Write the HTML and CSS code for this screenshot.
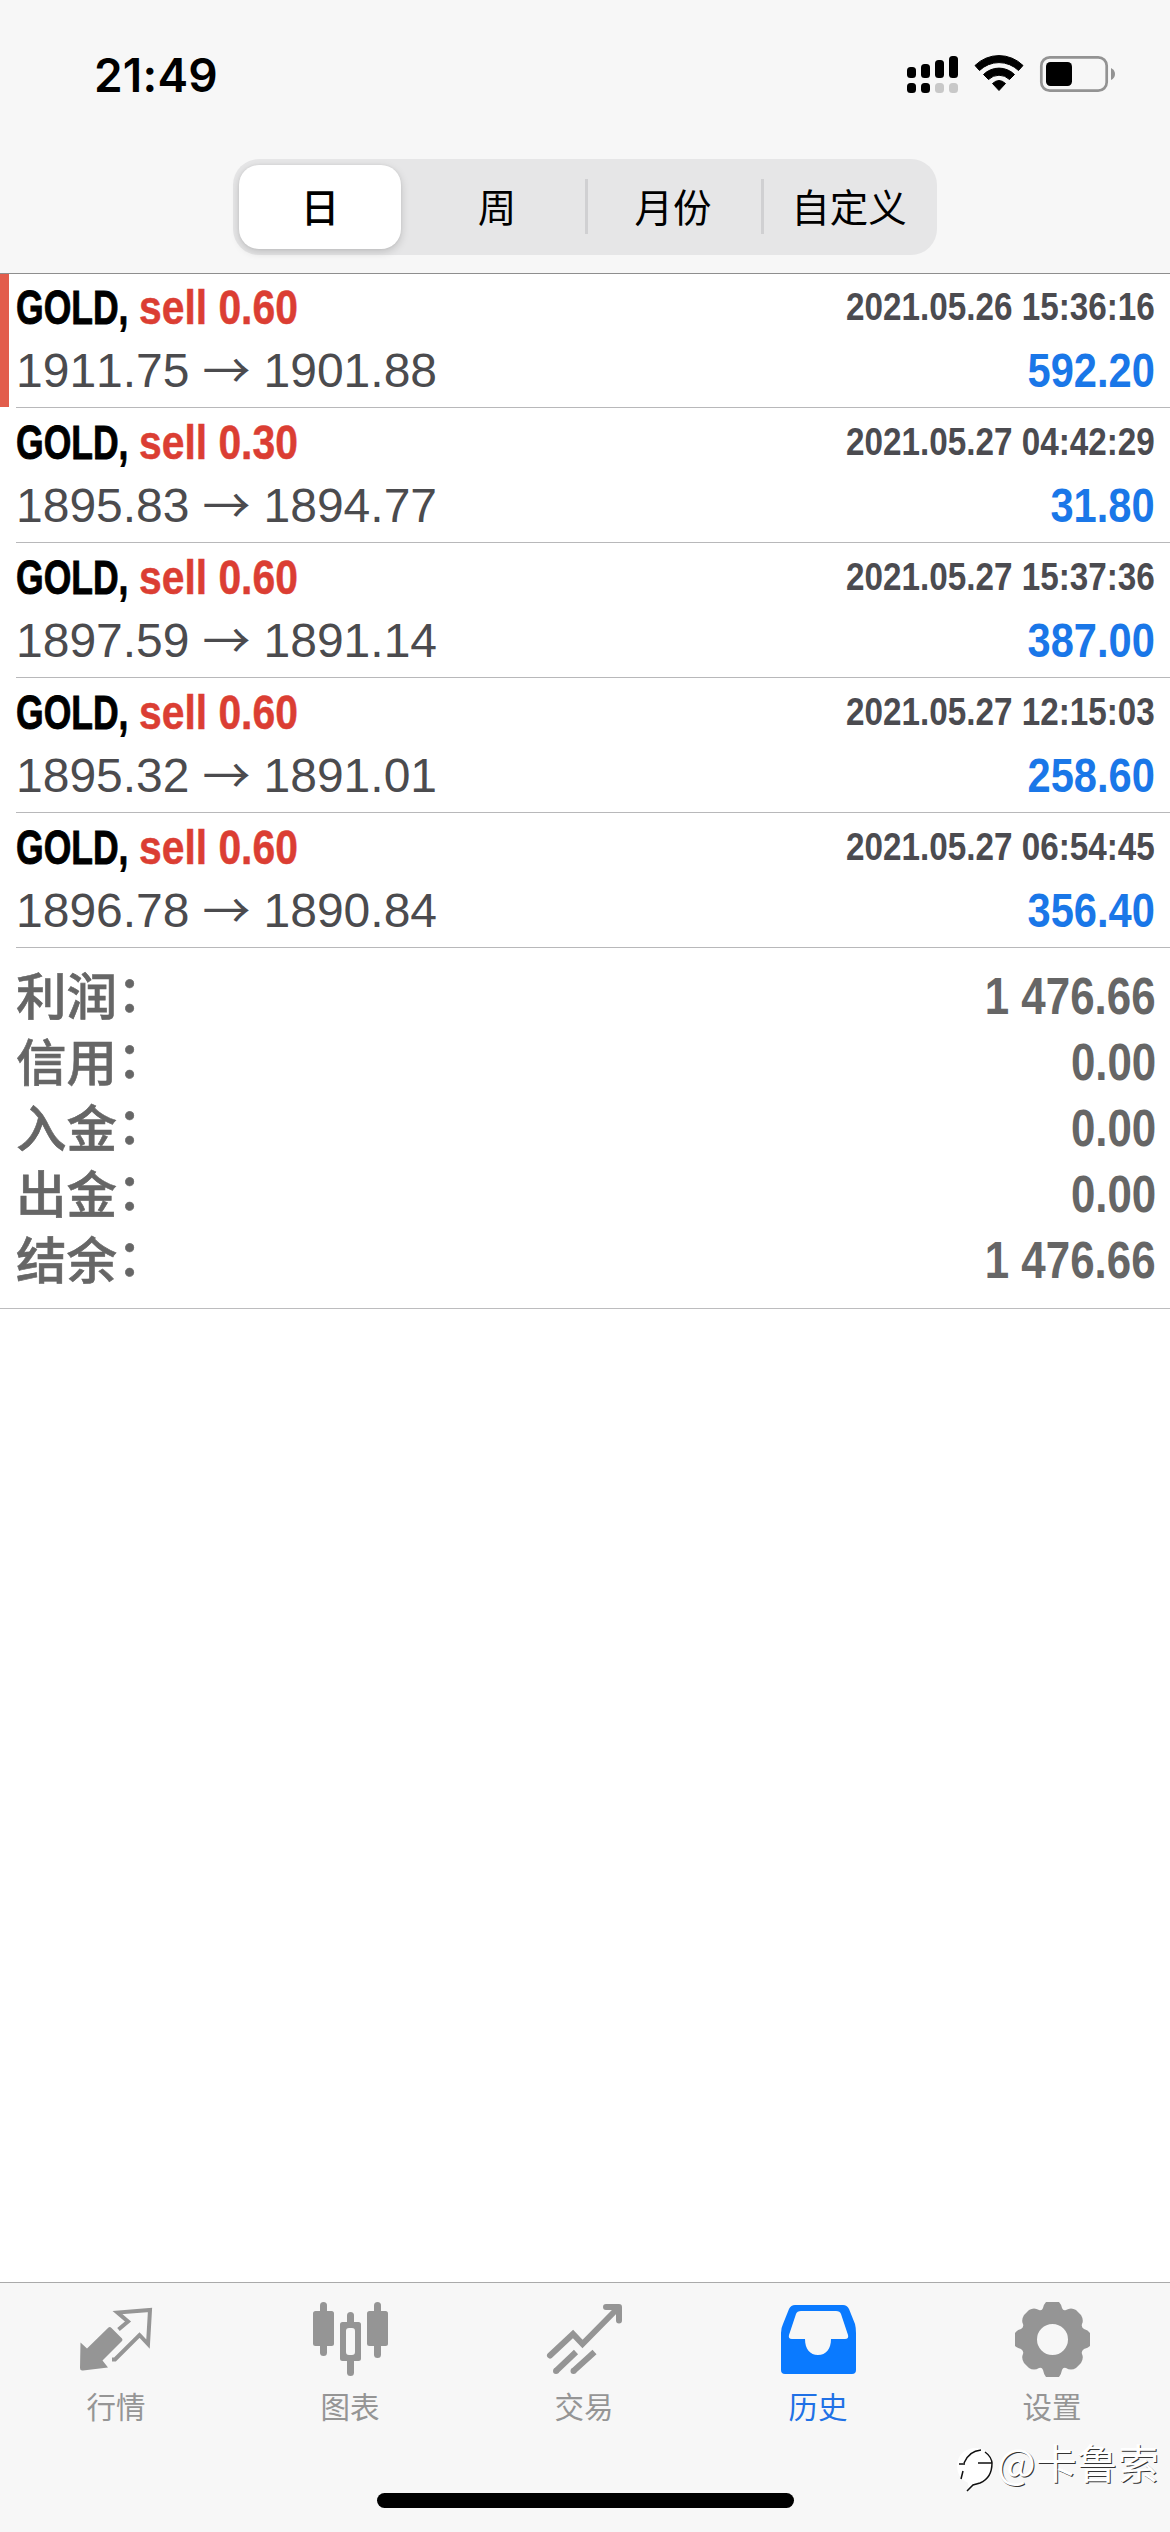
FILE: index.html
```html
<!DOCTYPE html>
<html lang="zh-CN">
<head>
<meta charset="utf-8">
<title>历史</title>
<link rel="stylesheet" href="styles.css">
</head>
<body>
<div class="app">
  <header class="header">
    <div class="status">
      <span class="time">21:49</span>
      <svg class="status-icons" width="212" height="40" viewBox="0 0 212 40">
        <g>
          <rect x="1" y="13" width="9" height="11" rx="3.5"/><rect x="15" y="10" width="9" height="14" rx="3.5"/>
          <rect x="29" y="6" width="9" height="18" rx="3.5"/><rect x="43" y="2" width="9" height="22" rx="3.5"/>
          <rect x="1" y="29" width="9" height="10" rx="3.5"/><rect x="15" y="29" width="9" height="10" rx="3.5"/>
          <rect x="29" y="29" width="9" height="10" rx="3.5" fill="#c8c8c8"/><rect x="43" y="29" width="9" height="10" rx="3.5" fill="#c8c8c8"/>
        </g>
        <path d="M69 11.5A34 34 0 0 1 117 11.5L112.5 16.5A28 28 0 0 0 73.500 16.500Z" stroke="#000" stroke-width="1" stroke-linejoin="round"/>
        <path d="M77.500 20.500A22 22 0 0 1 108.500 20.500L103.500 25.500A15 15 0 0 0 82.500 25.500Z" stroke="#000" stroke-width="1" stroke-linejoin="round"/>
        <path d="M86.500 29.500Q93 23.500 99.500 29.500L93 36.500Z" stroke="#000" stroke-width="1" stroke-linejoin="round"/>
        <rect x="135.300" y="3.300" width="65.400" height="33.400" rx="8.500" fill="none" stroke="#939393" stroke-width="2.700"/>
        <rect x="140" y="8" width="26" height="24" rx="4.500"/>
        <path d="M205 14Q209 16 209 20T205 26Z" fill="#939393"/>
      </svg>
    </div>
    <nav class="segments">
      <span class="segment selected">日</span>
      <span class="segment">周</span>
      <span class="segment divided">月份</span>
      <span class="segment divided">自定义</span>
    </nav>
  </header>

  <main class="history">
    <section class="deal marked"><div class="deal-body">
      <div class="line"><span class="symbol">GOLD,</span><span class="side">sell 0.60</span><span class="date">2021.05.26 15:36:16</span></div>
      <div class="line prices"><span>1911.75</span><span class="arrow">→</span><span>1901.88</span><span class="profit">592.20</span></div>
    </div></section>
    <section class="deal"><div class="deal-body">
      <div class="line"><span class="symbol">GOLD,</span><span class="side">sell 0.30</span><span class="date">2021.05.27 04:42:29</span></div>
      <div class="line prices"><span>1895.83</span><span class="arrow">→</span><span>1894.77</span><span class="profit">31.80</span></div>
    </div></section>
    <section class="deal"><div class="deal-body">
      <div class="line"><span class="symbol">GOLD,</span><span class="side">sell 0.60</span><span class="date">2021.05.27 15:37:36</span></div>
      <div class="line prices"><span>1897.59</span><span class="arrow">→</span><span>1891.14</span><span class="profit">387.00</span></div>
    </div></section>
    <section class="deal"><div class="deal-body">
      <div class="line"><span class="symbol">GOLD,</span><span class="side">sell 0.60</span><span class="date">2021.05.27 12:15:03</span></div>
      <div class="line prices"><span>1895.32</span><span class="arrow">→</span><span>1891.01</span><span class="profit">258.60</span></div>
    </div></section>
    <section class="deal"><div class="deal-body">
      <div class="line"><span class="symbol">GOLD,</span><span class="side">sell 0.60</span><span class="date">2021.05.27 06:54:45</span></div>
      <div class="line prices"><span>1896.78</span><span class="arrow">→</span><span>1890.84</span><span class="profit">356.40</span></div>
    </div></section>

    <section class="summary">
      <div class="total"><span class="label">利润<span class="colon">：</span></span><span class="amount">1 476.66</span></div>
      <div class="total"><span class="label">信用<span class="colon">：</span></span><span class="amount">0.00</span></div>
      <div class="total"><span class="label">入金<span class="colon">：</span></span><span class="amount">0.00</span></div>
      <div class="total"><span class="label">出金<span class="colon">：</span></span><span class="amount">0.00</span></div>
      <div class="total"><span class="label">结余<span class="colon">：</span></span><span class="amount">1 476.66</span></div>
    </section>
  </main>

  <footer class="footer">
    <nav class="tabs">
      <div class="tab">
        <svg width="80" height="80" viewBox="0 0 80 80">
          <path d="M4.500 51.500L11 57.500 32.500 36.500Q34 35.500 35.500 37L46 47.500Q47 49 46 50L26.500 69.500 32 76.500 7 79.500Q4 80 4 77Z"/>
          <path d="M42.500 38.500L52 30.500 41.500 21.500 74 19 72 53 63.500 44 39 68.500H36" fill="none" stroke="#959595" stroke-width="4"/>
        </svg>
        <span>行情</span>
      </div>
      <div class="tab">
        <svg width="80" height="80" viewBox="0 0 80 80">
          <g><rect x="3" y="20" width="21" height="35" rx="2.500"/><rect x="10" y="11" width="7" height="54" rx="3.500"/>
          <rect x="57" y="20" width="21" height="35" rx="2.500"/><rect x="64" y="11" width="7" height="56" rx="3.500"/>
          <rect x="37" y="21" width="7" height="14" rx="3.500"/><rect x="37" y="66" width="7" height="19" rx="3.500"/>
          <path fill-rule="evenodd" d="M32.500 31H48.500Q51 31 51 33.500V67.500Q51 70 48.500 70H32.500Q30 70 30 67.500V33.500Q30 31 32.500 31ZM39 37Q36 37 36 40V61Q36 64 39 64H42Q45 64 45 61V40Q45 37 42 37Z"/></g>
        </svg>
        <span>图表</span>
      </div>
      <div class="tab">
        <svg width="80" height="80" viewBox="0 0 80 80">
          <g fill="none" stroke="#959595" stroke-width="6" stroke-linecap="round"><path d="M6 64.500L29 43 38.500 53 72 19"/><path d="M62 16H75V29.500" stroke-linejoin="round"/></g>
          <g fill="none" stroke="#959595" stroke-width="6"><path d="M12 80L32 61M29.500 80L50.500 61"/><path d="M12 80h.01M29.500 80h.01" stroke-linecap="round"/></g>
        </svg>
        <span>交易</span>
      </div>
      <div class="tab active">
        <svg width="80" height="80" viewBox="0 0 80 80">
          <path fill-rule="evenodd" d="M17 14H65Q69 14 71 18L77 33Q78 37 78 42V79Q78 83 74 83H7Q3 83 3 79V42Q3 37 5 33L11 18Q13 14 17 14ZM23 20Q19 20 18 23L11 44Q10 48 14 48H27C27 58 32 64 40 64C48 64 53 58 53 48H67Q71 48 70 44L63 23Q62 20 58 20Z"/>
        </svg>
        <span>历史</span>
      </div>
      <div class="tab">
        <svg width="80" height="80" viewBox="0 0 80 80">
          <path fill-rule="evenodd" d="M34 11H47Q49 13 50 17Q51 20 54 19Q59 16 64 19L69 24Q72 29 70 33Q69 36 72 38Q76 39 78 42V55Q76 57 72 58Q69 60 70 63Q72 67 69 72L64 77Q59 80 54 77Q51 76 50 79Q49 84 47 86H34Q32 84 31 79Q30 76 27 77Q22 80 17 77L12 72Q9 67 11 63Q12 60 9 58Q5 57 3 55V42Q5 39 9 38Q12 36 11 33Q9 29 12 24L17 19Q22 16 27 19Q30 20 31 17Q32 13 34 11ZM40.500 33A15.500 15.500 0 1 0 40.500 64A15.500 15.500 0 1 0 40.500 33Z"/>
        </svg>
        <span>设置</span>
      </div>
    </nav>
    <div class="home-bar"></div>
  </footer>

  <div class="watermark">
    <svg width="41" height="48" viewBox="0 0 41 48">
      <path d="M18 1Q36 1 37 18Q37 34 22 37L13 43 12 36Q1 31 1 19Q2 3 18 1Z" fill="#fff"/>
      <path d="M8 16Q13 4 25 3M3 17H9M7 24L5 32M22 16H36Q36 31 24 36L17 38 11 44M29 5Q36 10 36 17" fill="none" stroke="#111" stroke-width="1.500"/>
    </svg>
    <span>@卡鲁索</span>
  </div>
</div>
</body>
</html>
```
FILE: styles.css
```css
* { box-sizing: border-box; }
body { margin: 0; background: #fff; }
svg { display: block; overflow: visible; }

.app {
  position: relative;
  display: flex;
  flex-direction: column;
  width: 1170px;
  height: 2532px;
  overflow: hidden;
  font-family: "Liberation Sans", "Noto Sans CJK SC", sans-serif;
  font-kerning: none;
}

.header {
  position: relative;
  z-index: 1;
  height: 273px;
  background: #f7f7f7;
  box-shadow: 0 1px 0 #8e8e8e;
}
.status {
  display: flex;
  justify-content: space-between;
  height: 159px;
  padding: 54px 52px 0 94px;
}
.time {
  font: 600 46px/42px Inter, sans-serif;
  letter-spacing: 0.2px;
}
.segments {
  display: flex;
  width: 704px;
  height: 96px;
  margin-left: 233px;
  padding: 6px 0 6px 6px;
  border-radius: 26px;
  background: #e6e6e7;
  font: 38.500px/80px "Noto Sans CJK SC", sans-serif;
}
.segment {
  flex: 1;
  text-align: center;
}
.segment.selected {
  flex: none;
  width: 162px;
  margin-right: 8px;
  border-radius: 20px;
  background: #fff;
  box-shadow: 0 3px 9px rgba(0, 0, 0, .17), 0 0 3px rgba(0, 0, 0, .06);
  font-weight: 500;
}
.divided {
  background: linear-gradient(#d0d0d2, #d0d0d2) 0 14px / 3px 55px no-repeat;
}

.history { flex: 1; }
.deal {
  height: 135px;
  padding-left: 16px;
}
.deal.marked { background: linear-gradient(#e25d4c, #e25d4c) 0 0 / 9px 134px no-repeat; }
.deal-body {
  height: 135px;
  padding: 4px 15px 0 0;
  border-bottom: 1px solid #b8b8ba;
}
.line {
  display: flex;
  height: 63px;
  line-height: 60px;
  font-size: 49px;
  font-weight: 700;
  white-space: nowrap;
}
.symbol {
  width: 123px;
  transform: scaleX(.725);
  transform-origin: left;
  -webkit-text-stroke: .9px;
}
.side {
  color: #db3e33;
  transform: scaleX(.833);
  transform-origin: left;
  -webkit-text-stroke: .5px;
}
.date {
  margin-left: auto;
  color: #4b4b50;
  font-size: 39.500px;
  line-height: 58px;
  transform: scaleX(.842);
  transform-origin: right;
}
.prices {
  color: #4b4b4e;
  font-size: 48px;
  font-weight: 400;
  line-height: 61px;
}
.arrow {
  width: 74px;
  text-align: center;
  font-family: "Noto Sans CJK SC", sans-serif;
  line-height: 55px;
}
.profit {
  margin-left: auto;
  color: #1a77e8;
  font-size: 49px;
  font-weight: 700;
  line-height: 60px;
  transform: scaleX(.85);
  transform-origin: right;
}

.summary {
  height: 361px;
  padding: 15px 14px 0 16px;
  border-bottom: 1px solid #bcbcbe;
  color: #666;
  font-size: 51px;
  line-height: 67px;
}
.total {
  display: flex;
  justify-content: space-between;
  height: 66px;
}
.label {
  font: 500 50.500px/60px "Noto Sans CJK SC", sans-serif;
  -webkit-text-stroke: .6px;
}
.colon {
  display: inline-block;
  transform: translate(0, -3px);
}
.amount {
  font-weight: 700;
  transform: scaleX(.86);
  transform-origin: right;
}

.footer {
  display: flex;
  flex-direction: column;
  justify-content: space-between;
  align-items: center;
  height: 250px;
  padding-bottom: 24px;
  border-top: 1px solid #aaa;
  background: #f7f7f7;
}
.tabs {
  display: flex;
  width: 1170px;
}
.tab {
  display: flex;
  flex-direction: column;
  align-items: center;
  width: 234px;
  padding: 8px 2px 0 0;
  color: #959595;
  fill: #959595;
  font: 29.500px/36px "Noto Sans CJK SC", sans-serif;
}
.tab span { margin-top: 16px; }
.tab.active { color: #2071e6; fill: #0a7aff; }
.home-bar {
  width: 417px;
  height: 15px;
  border-radius: 8px;
  background: #000;
}

.watermark {
  position: absolute;
  left: 956px;
  top: 2447px;
  display: flex;
  color: #fff;
  font: 41px/29px "Noto Sans CJK SC", sans-serif;
  text-shadow: 1px 1px 0 #333;
  white-space: nowrap;
}
```
